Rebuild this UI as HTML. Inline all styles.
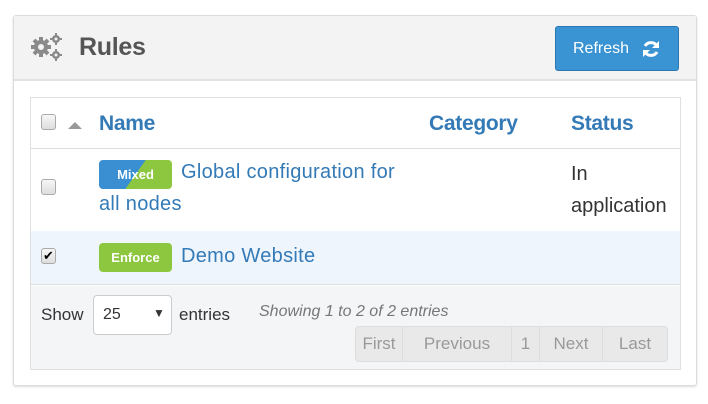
<!DOCTYPE html>
<html><head><meta charset="utf-8"><style>
*{box-sizing:border-box;margin:0;padding:0}
body{width:708px;height:404px;background:#fff;font-family:"Liberation Sans",sans-serif;position:relative;overflow:hidden}
.panel{position:absolute;left:13px;top:15px;width:684px;height:371px;border:1px solid #ddd;border-radius:3px;box-shadow:0 1px 2px rgba(0,0,0,.15)}
.head{position:absolute;left:0;top:0;width:682px;height:65px;background:#f3f3f3;border-bottom:2px solid #e2e2e2}
.title{position:absolute;left:65px;top:17px;font-size:25px;font-weight:bold;color:#555;letter-spacing:-0.3px}
.btn{position:absolute;left:541px;top:10px;width:124px;height:45px;background:#3a93d3;border:1px solid #2a78b3;border-radius:3px;color:#fff;font-size:16px;padding:13px 0 0 17px;letter-spacing:0}
.tbl{position:absolute;left:16px;top:81px;width:651px;height:273px;border:1px solid #e0e0e0}
.abs{position:absolute}
.cb{position:absolute;width:15px;height:16px;border:1px solid #aaa;border-radius:3px;background:linear-gradient(#f7f7f7,#ddd)}
.th{position:absolute;top:14px;font-size:21px;font-weight:bold;color:#337ab7;letter-spacing:-0.3px}
.lnk{color:#337ab7;font-size:20px;letter-spacing:0.3px}
.badge{position:absolute;height:29px;border-radius:4px;color:#fff;font-weight:bold;font-size:13px;text-align:center;line-height:29px}
.pg{position:absolute;top:0;height:34px;line-height:34px;color:#999;font-size:17px;text-align:center;border-right:1px solid #ddd}
</style></head><body>
<div class="panel">
 <div class="head">
  <svg class="abs" style="left:16px;top:16px" width="34" height="30" viewBox="0 0 34 30">
   <g fill="#8a8a8a">
    <circle cx="11" cy="15" r="7"/>
    <g stroke="#8a8a8a" stroke-width="4"><line x1="11" y1="5" x2="11" y2="25"/><line x1="1" y1="15" x2="21" y2="15"/><line x1="4" y1="8" x2="18" y2="22"/><line x1="18" y1="8" x2="4" y2="22"/></g>
    <circle cx="11" cy="15" r="3" fill="#f3f3f3"/>
    <circle cx="26" cy="7" r="4"/><circle cx="26" cy="23" r="4"/>
    <g stroke="#8a8a8a" stroke-width="2"><line x1="26" y1="1" x2="26" y2="13"/><line x1="20" y1="7" x2="32" y2="7"/><line x1="26" y1="17" x2="26" y2="29"/><line x1="20" y1="23" x2="32" y2="23"/></g>
    <circle cx="26" cy="7" r="1.5" fill="#f3f3f3"/><circle cx="26" cy="23" r="1.5" fill="#f3f3f3"/>
   </g>
  </svg>
  <div class="title">Rules</div>
  <div class="btn">Refresh
   <svg class="abs" style="left:85px;top:12px" width="20" height="20" viewBox="0 0 20 20"><g fill="none" stroke="#fff" stroke-width="3"><path d="M16 7A7 7 0 0 0 4 7"/><path d="M4 13A7 7 0 0 0 16 13"/></g><path d="M18 2v7h-7z" fill="#fff"/><path d="M2 18v-7h7z" fill="#fff"/></svg>
  </div>
 </div>
 <div class="tbl">
  <div class="abs" style="left:0;top:0;width:649px;height:51px;border-bottom:1px solid #ddd"></div>
  <div class="cb" style="left:10px;top:16px"></div>
  <div class="abs" style="left:37px;top:24px;width:0;height:0;border-left:7px solid transparent;border-right:7px solid transparent;border-bottom:7px solid #999"></div>
  <div class="th" style="left:68px">Name</div>
  <div class="th" style="left:398px">Category</div>
  <div class="th" style="left:540px">Status</div>
  <div class="cb" style="left:10px;top:81px"></div>
  <div class="badge" style="left:68px;top:62px;width:73px;background:linear-gradient(125deg,#3a8fd2 50%,#8dc63f 50%)">Mixed</div>
  <div class="abs lnk" style="left:150px;top:63px">Global configuration for</div>
  <div class="abs lnk" style="left:68px;top:95px">all nodes</div>
  <div class="abs" style="left:540px;top:60px;font-size:20px;color:#333;line-height:32px">In<br>application</div>
  <div class="abs" style="left:0;top:133px;width:649px;height:54px;background:#eff5fd;border-bottom:1px solid #ddd"></div>
  <div class="cb" style="left:10px;top:150px;font-size:13px;line-height:14px;text-align:center">✔</div>
  <div class="badge" style="left:68px;top:145px;width:73px;background:#8dc63f">Enforce</div>
  <div class="abs lnk" style="left:150px;top:147px">Demo Website</div>
  <div class="abs" style="left:0;top:188px;width:649px;height:83px;background:#f4f5f7"></div>
  <div class="abs" style="left:10px;top:207px;font-size:17px;color:#333">Show</div>
  <div class="abs" style="left:62px;top:197px;width:79px;height:40px;border:1px solid #ccc;border-radius:4px;background:#fff;font-size:16px;color:#333;padding:10px 0 0 9px">25<span class="abs" style="left:59px;top:10px;font-size:12px">▼</span></div>
  <div class="abs" style="left:148px;top:207px;font-size:17px;color:#333">entries</div>
  <div class="abs" style="left:228px;top:205px;font-size:16px;color:#777;font-style:italic">Showing 1 to 2 of 2 entries</div>
  <div class="abs" style="left:324px;top:228px;width:313px;height:36px;border:1px solid #ddd;border-radius:4px;background:#e9e9e9">
   <div class="pg" style="left:0;width:47px">First</div>
   <div class="pg" style="left:47px;width:109px">Previous</div>
   <div class="pg" style="left:156px;width:28px">1</div>
   <div class="pg" style="left:184px;width:63px">Next</div>
   <div class="pg" style="left:247px;width:64px;border-right:none">Last</div>
  </div>
 </div>
</div>
</body></html>
